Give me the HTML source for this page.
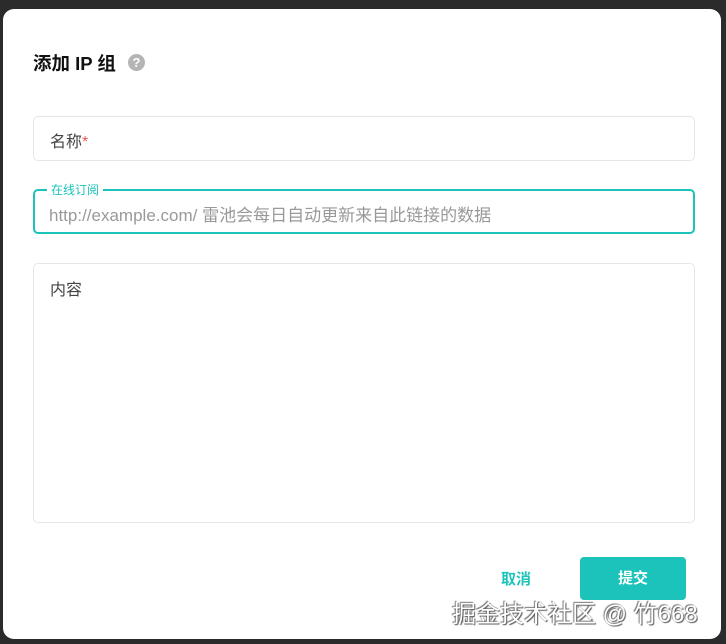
<!DOCTYPE html>
<html><head><meta charset="utf-8"><style>
*{margin:0;padding:0;box-sizing:border-box}
body{width:726px;height:644px;background:#2b2b2b;position:relative;overflow:hidden;font-family:"Liberation Sans","Noto Sans CJK SC",sans-serif}
.dlg{position:absolute;left:3px;top:9px;width:718px;height:630px;background:#fff;border-radius:11px}
.t{position:absolute;left:33px;top:50px;font-size:18.5px;font-weight:bold;color:#111}
.q{position:absolute;left:128px;top:54px;width:17px;height:17px;border-radius:50%;background:#b5b5b5;color:#fff;font-size:13px;font-weight:bold;text-align:center;line-height:17px}
.box{position:absolute;left:33px;width:662px;border:1px solid #e6e6e6;border-radius:5px}
.lbl{position:absolute;left:16px;font-size:16px;color:#444}
.teal{border:2px solid #1cc3bb}
.leg{position:absolute;left:12px;top:-10px;background:#fff;padding:0 4px;font-size:12px;color:#1cc3bb}
.ph{position:absolute;left:14px;top:10px;font-size:17px;color:#999;white-space:nowrap}
.cancel{position:absolute;left:501px;top:568px;font-size:15px;font-weight:bold;color:#1cc3bb}
.ok{position:absolute;left:580px;top:557px;width:106px;height:43px;background:#1cc3bb;border-radius:4px;color:#fff;font-size:15px;font-weight:bold;text-align:center;line-height:43px}
.wm{position:absolute;left:452px;top:594px;font-size:24px;color:#fff;text-shadow:1px 1px 1px #555,-1px -1px 1px #777;white-space:nowrap}
</style></head><body>
<div class="dlg"></div>
<div class="t">添加 IP 组</div>
<div class="q">?</div>
<div class="box" style="top:116px;height:45px"><span class="lbl" style="top:11px">名称<span style="color:#e55">*</span></span></div>
<div class="box teal" style="top:189px;height:45px"><span class="leg">在线订阅</span><span class="ph">http://example.com/ 雷池会每日自动更新来自此链接的数据</span></div>
<div class="box" style="top:263px;height:260px"><span class="lbl" style="top:12px">内容</span></div>
<div class="cancel">取消</div>
<div class="ok">提交</div>
<div class="wm">掘金技术社区 @ 竹668</div>
</body></html>
